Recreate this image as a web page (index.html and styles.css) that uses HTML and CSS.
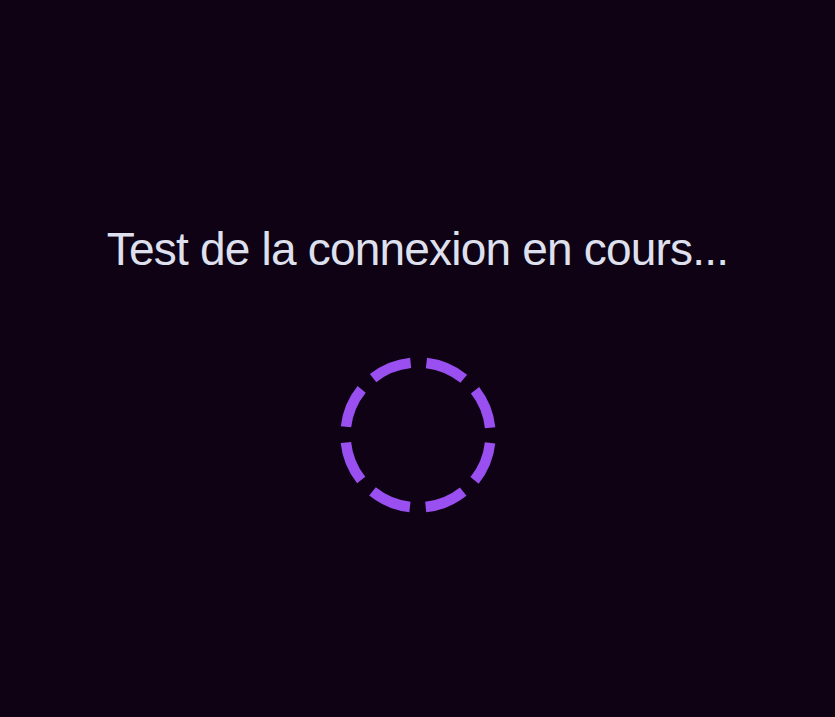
FILE: index.html
```html
<!DOCTYPE html>
<html lang="fr">
<head>
<meta charset="utf-8">
<title>Test de la connexion</title>
<link rel="stylesheet" href="styles.css">
</head>
<body>
<main class="screen">
  <p class="status">Test de la connexion en cours...</p>
  <svg class="spinner" width="160" height="160" viewBox="0 0 160 160" aria-hidden="true">
    <circle cx="80" cy="80" r="72.5" fill="none" stroke="#9a4ff0" stroke-width="10.5"
            stroke-dasharray="40.94 16" stroke-dashoffset="48.94"/>
  </svg>
</main>
</body>
</html>
```

FILE: styles.css
```css
html, body {
  margin: 0;
  padding: 0;
  background: #0e0214;
}

.screen {
  box-sizing: border-box;
  min-height: 100vh;
  padding-top: 20px;
  display: flex;
  flex-direction: column;
  align-items: center;
  justify-content: center;
}

.status {
  margin: 0;
  font-family: "Liberation Sans", Arial, sans-serif;
  font-size: 46px;
  line-height: 53px;
  letter-spacing: -0.8px;
  color: #dfe0ee;
}

.spinner {
  display: block;
  margin-top: 79px;
}
```
